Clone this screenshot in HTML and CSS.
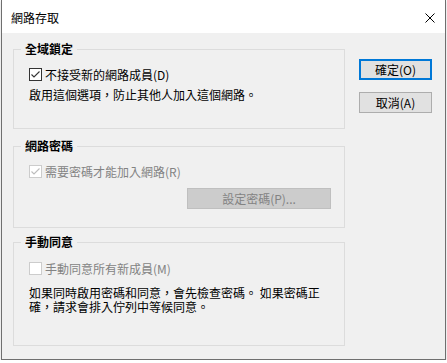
FILE: index.html
```html
<!DOCTYPE html>
<html lang="zh-Hant">
<head>
<meta charset="utf-8">
<title>網路存取</title>
<link rel="stylesheet" href="styles.css">
</head>
<body>
<div class="window">
  <div class="titlebar">
    <span class="title">網路存取</span>
    <svg class="close" width="10" height="10" viewBox="0 0 10 10"><path d="M0.5 0.5 L9.5 9.5 M9.5 0.5 L0.5 9.5" stroke="#000" stroke-width="1" fill="none"/></svg>
  </div>
  <div class="body">
    <div class="groups">
      <fieldset class="group g1">
        <legend>全域鎖定</legend>
        <div class="content">
          <div class="check"><span class="box"><svg width="11" height="11" viewBox="0 0 11 11"><path d="M1.5 5.5 L4 8 L9.5 2.5" stroke="#333" stroke-width="1.1" fill="none"/></svg></span><span>不接受新的網路成員(D)</span></div>
          <p class="desc">啟用這個選項，防止其他人加入這個網路。</p>
        </div>
      </fieldset>
      <fieldset class="group g2">
        <legend>網路密碼</legend>
        <div class="content">
          <div class="check disabled"><span class="box"><svg width="11" height="11" viewBox="0 0 11 11"><path d="M1.5 5.5 L4 8 L9.5 2.5" stroke="#bcbcbc" stroke-width="1.1" fill="none"/></svg></span><span>需要密碼才能加入網路(R)</span></div>
          <div class="btnrow"><span class="btn-disabled">設定密碼(P)...</span></div>
        </div>
      </fieldset>
      <fieldset class="group g3">
        <legend>手動同意</legend>
        <div class="content">
          <div class="check disabled"><span class="box"></span><span>手動同意所有新成員(M)</span></div>
          <p class="desc">如果同時啟用密碼和同意，會先檢查密碼。 如果密碼正確，請求會排入佇列中等候同意。</p>
        </div>
      </fieldset>
    </div>
    <div class="buttons">
      <button class="btn default">確定(O)</button>
      <button class="btn">取消(A)</button>
    </div>
  </div>
</div>
</body>
</html>
```

FILE: styles.css
```css
html, body {
  margin: 0;
  padding: 0;
  background: #ffffff;
}
body {
  font-family: "Noto Sans CJK TC", "Noto Sans", sans-serif;
  font-size: 12px;
  line-height: 14px;
  color: #000;
}
.window {
  box-sizing: border-box;
  width: 445px;
  height: 360px;
  margin-left: 1px;
  border: 1px solid #6f6f6f;
  border-top: none;
  background: #f0f0f0;
  box-shadow: 0 1px 3px rgba(0,0,0,0.18);
  display: flex;
  flex-direction: column;
}
.titlebar {
  height: 33px;
  flex: none;
  background: #ffffff;
  display: flex;
  align-items: center;
  justify-content: space-between;
  padding: 3px 10px 0 9px;
  box-sizing: border-box;
}
.title {
  font-size: 12px;
  line-height: 14px;
}
.close {
  display: block;
}
.body {
  flex: 1;
  display: flex;
  padding: 9px 0 0 11px;
}
.groups {
  width: 332px;
  display: flex;
  flex-direction: column;
}
.group {
  box-sizing: border-box;
  width: 332px;
  margin: 0;
  padding: 0 0 0 7px;
  border: 1px solid #dcdcdc;
  min-width: 0;
}
.group legend {
  padding: 0 4px;
  font-weight: bold;
  font-size: 12px;
  line-height: 14px;
}
.content {
  padding: 0 13px 0 8px;
}
.g1 .content { padding-top: 12px; padding-bottom: 26px; }
.g2 { margin-top: 10px; }
.g2 .content { padding-top: 12px; padding-bottom: 18px; }
.g3 { margin-top: 7px; }
.g3 .content { padding-top: 13px; padding-bottom: 31px; }
.check {
  display: flex;
  align-items: center;
  height: 13px;
  gap: 3px;
}
.box {
  box-sizing: border-box;
  width: 13px;
  height: 13px;
  border: 1px solid #333333;
  background: #ffffff;
  display: flex;
  align-items: center;
  justify-content: center;
  flex: none;
}
.box svg { display: block; }
.check.disabled { color: #838383; }
.check.disabled .box { border-color: #cccccc; }
.desc {
  margin: 7px 0 0 0;
}
.g3 .desc { margin-top: 11px; }
.btnrow {
  margin-top: 10px;
  display: flex;
  justify-content: flex-end;
}
.btn-disabled {
  box-sizing: border-box;
  width: 144px;
  height: 21px;
  background: #cccccc;
  border: 1px solid #bfbfbf;
  color: #838383;
  display: flex;
  align-items: center;
  justify-content: center;
}
.buttons {
  margin-left: 14px;
  margin-top: 17px;
  display: flex;
  flex-direction: column;
  gap: 12px;
}
.btn {
  box-sizing: border-box;
  width: 73px;
  height: 21px;
  margin: 0;
  padding: 0;
  background: #e1e1e1;
  border: 1px solid #adadad;
  font-family: inherit;
  font-size: 12px;
  line-height: 14px;
  color: #000;
}
.btn.default {
  border: 2px solid #0078d7;
}
```
